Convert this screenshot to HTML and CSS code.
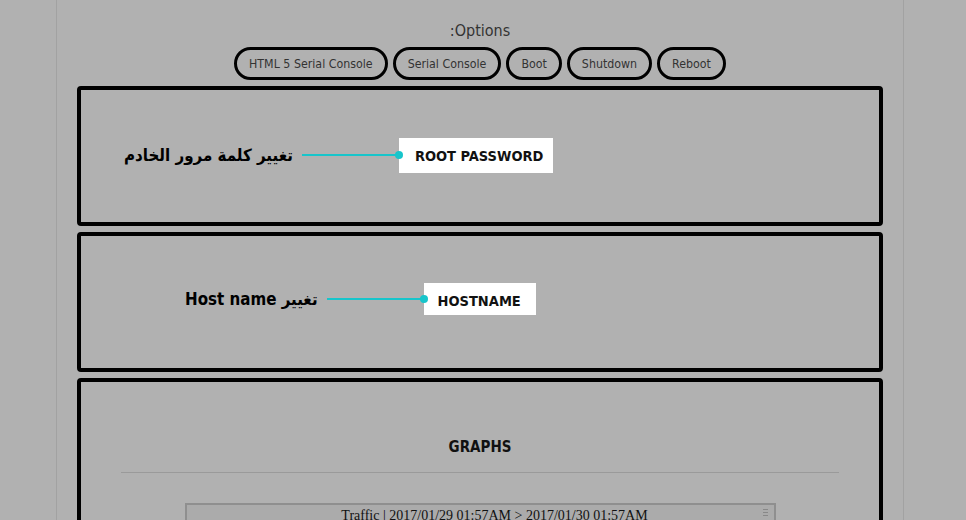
FILE: index.html
```html
<html>
<head>
  <meta charset="utf-8">
  <meta name="viewport" content="width=device-width, initial-scale=1.0">
  <link rel="stylesheet" href="styles.css">
</head>
<body>
  <div class="page">
    <!-- options -->
    <h3 class="options-title" dir="rtl">Options:</h3>
    <div class="options">
      <a class="opt-btn">HTML 5 Serial Console</a>
      <a class="opt-btn">Serial Console</a>
      <a class="opt-btn">Boot</a>
      <a class="opt-btn">Shutdown</a>
      <a class="opt-btn">Reboot</a>
    </div>

    <!-- root password -->
    <div class="panel">
      <div class="field-row row-pass">
        <span class="field-text" dir="rtl">تغيير كلمة مرور الخادم</span>
        <span class="field-line"></span>
        <span class="field-label">ROOT PASSWORD</span>
      </div>
    </div>

    <!-- hostname -->
    <div class="panel">
      <div class="field-row row-host">
        <span class="field-text" dir="rtl">تغيير Host name</span>
        <span class="field-line"></span>
        <span class="field-label label-host">HOSTNAME</span>
      </div>
    </div>

    <!-- graphs -->
    <div class="panel panel-graphs">
      <h4 class="graphs-title">GRAPHS</h4>
      <hr class="graphs-rule">
      <div class="graph-box">
        <div class="graph-head">Traffic | 2017/01/29 01:57AM &gt; 2017/01/30 01:57AM</div>
        <span class="grip"></span>
      </div>
    </div>
  </div>
</body>
</html>
```

FILE: styles.css
```css
/* page */
html, body {
  margin: 0;
  background: #b1b1b1;
  height: 100%;
  overflow: hidden;
}
.page {
  margin-left: 56px;
  width: 848px;
  min-height: 100%;
  border-left: 1px solid #a2a2a2;
  border-right: 1px solid #a2a2a2;
  padding: 21px 20px 0 20px;
  box-sizing: border-box;
  font-family: "DejaVu Sans Condensed", "Liberation Sans Narrow", "Noto Sans", sans-serif;
}

/* options */
.options-title {
  margin: 0;
  text-align: center;
  font-weight: normal;
  font-size: 16px;
  line-height: 20px;
  color: #333;
}
.options {
  display: flex;
  justify-content: center;
  gap: 5px;
  margin-top: 6px;
}
.opt-btn {
  display: block;
  height: 33px;
  line-height: 28px;
  box-sizing: border-box;
  padding: 0 12px;
  border: 3px solid #000;
  border-radius: 17px;
  font-size: 12.3px;
  color: #333;
}

/* panels */
.panel {
  margin-top: 6px;
  height: 140px;
  box-sizing: border-box;
  border: 4px solid #000;
  border-radius: 4px;
  display: flex;
  align-items: center;
}
.field-row {
  display: flex;
  align-items: center;
}
.row-pass {
  margin-left: 43px;
  margin-top: -2px;
}
.row-host {
  margin-left: 104px;
  margin-top: -7px;
}
.field-text {
  font-family: "DejaVu Sans Condensed", "DejaVu Sans", sans-serif;
  font-weight: bold;
  font-size: 16.8px;
  color: #000;
}
.field-line {
  position: relative;
  width: 97px;
  height: 2px;
  margin-left: 9px;
  background: #17c5cb;
}
.field-line::after {
  content: "";
  position: absolute;
  right: -4px;
  top: -3px;
  width: 8px;
  height: 8px;
  border-radius: 50%;
  background: #17c5cb;
}
.field-label {
  background: #fff;
  height: 35px;
  line-height: 37px;
  padding: 0 10px 0 16px;
  font-weight: bold;
  font-size: 14.5px;
  color: #111;
}
.label-host {
  height: 32px;
  line-height: 36px;
  padding: 0 15px 0 14px;
}

/* graphs */
.panel-graphs {
  display: block;
  height: 200px;
  padding: 0 40px;
}
.graphs-title {
  margin: 55px 0 0;
  text-align: center;
  font-size: 15px;
  line-height: 20px;
  color: #111;
}
.graphs-rule {
  margin: 15px 0 0;
  border: 0;
  border-top: 1px solid #9a9a9a;
}
.graph-box {
  position: relative;
  margin: 30px 63px 0 64px;
  height: 60px;
  border: 2px solid #8f8f8f;
  background: #ababab;
}
.graph-head {
  text-align: center;
  padding-left: 28px;
  font-family: "Liberation Serif", serif;
  font-size: 14px;
  line-height: 22px;
  color: #111;
}
.grip {
  position: absolute;
  right: 6px;
  top: 4px;
  width: 5px;
  height: 8px;
  background: repeating-linear-gradient(#888 0 1px, transparent 1px 3px);
}
```
